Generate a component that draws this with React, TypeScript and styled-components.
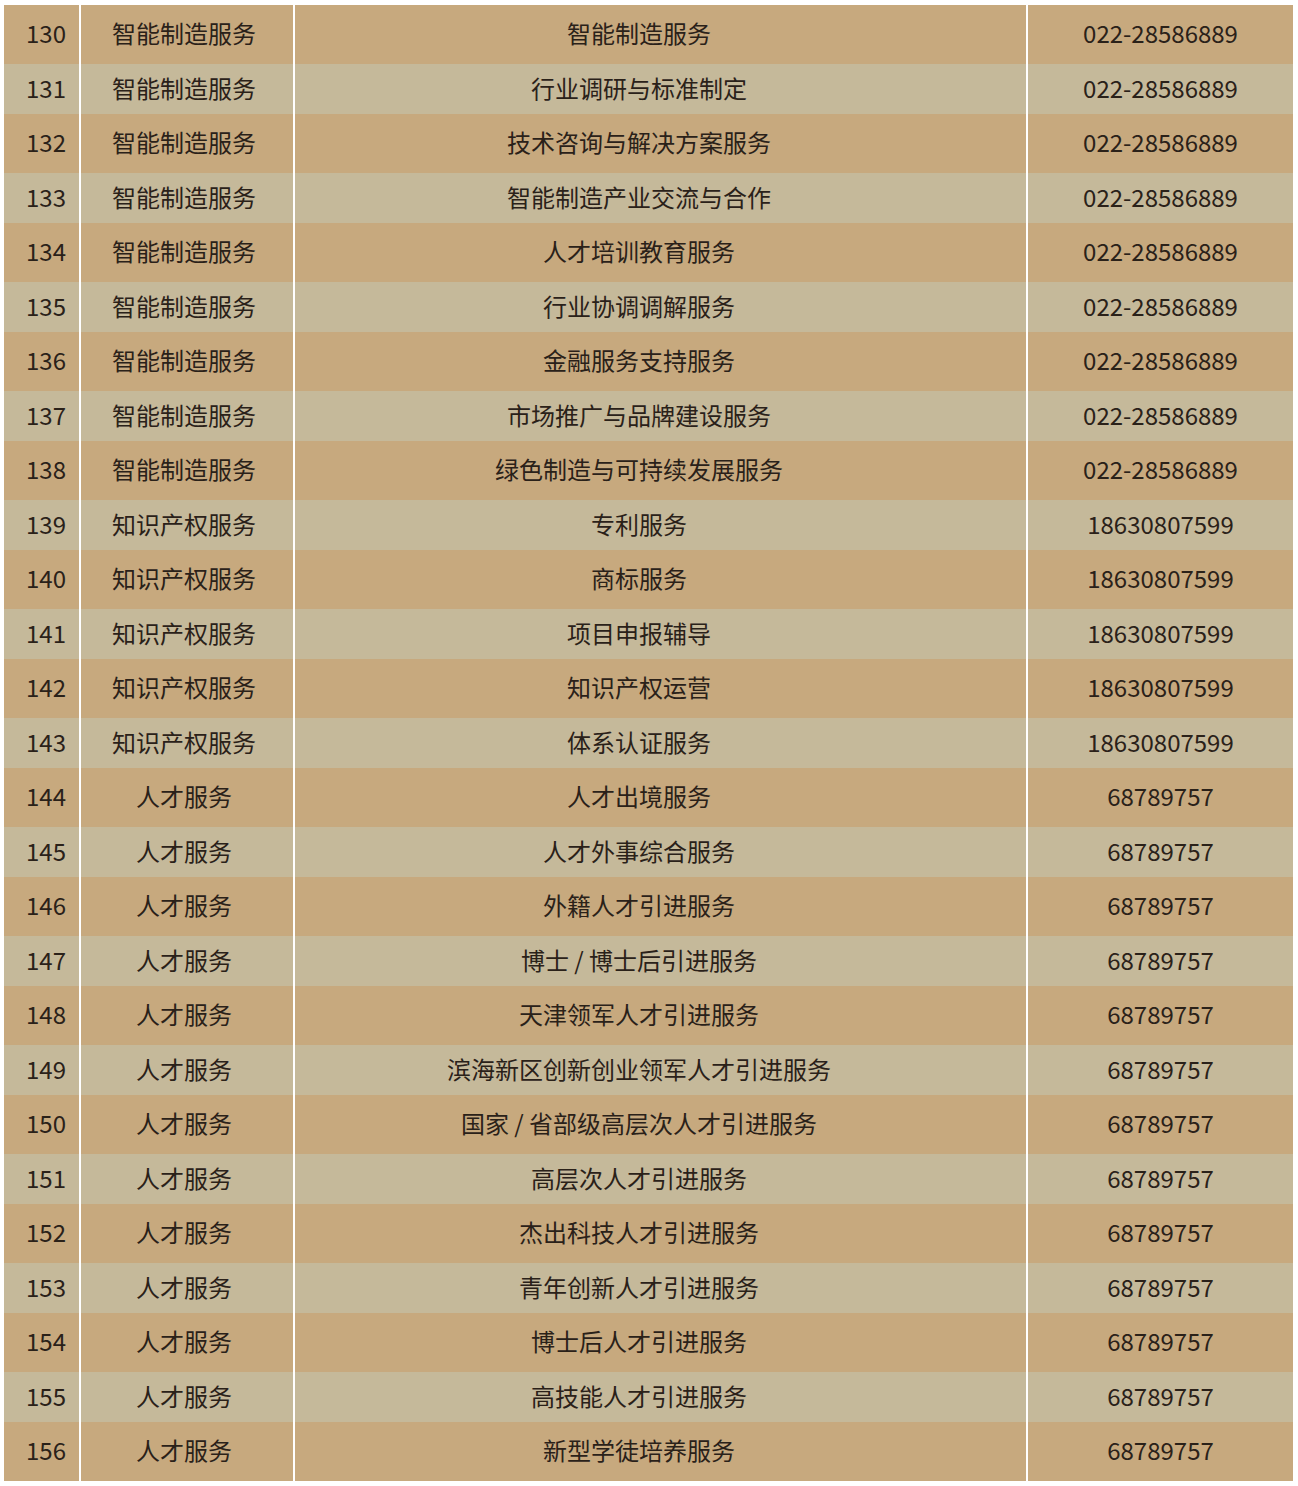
import React from "react";
import styled, { createGlobalStyle } from "styled-components";

const Global = createGlobalStyle`
  html, body { margin: 0; padding: 0; background: #ffffff; }
  body { font-family: "Noto Sans CJK SC", "Noto Sans", sans-serif; }
`;

const Table = styled.div`
  margin: 5px 0 0 4px;
  width: 1289px;
  display: flex;
  flex-direction: column;
  background: #ffffff;
`;

const Row = styled.div<{ $dark: boolean }>`
  display: grid;
  grid-template-columns: 75px 212px 731px 265px;
  column-gap: 2px;
  height: ${(p) => (p.$dark ? 59 : 50)}px;
  --cell-bg: ${(p) => (p.$dark ? "#c7a97e" : "#c5b99a")};
`;

const Cell = styled.div<{ $pl?: number; $pr?: number }>`
  background: var(--cell-bg);
  display: flex;
  align-items: center;
  justify-content: center;
  padding-left: ${(p) => p.$pl ?? 0}px;
  padding-right: ${(p) => p.$pr ?? 0}px;
  padding-bottom: 4px;
  font-size: 24px;
  color: #2a2119;
  white-space: nowrap;
  letter-spacing: 0;
`;

type Item = [number, string, string, string];

const rows: Item[] = [
  [130, "智能制造服务", "智能制造服务", "022-28586889"],
  [131, "智能制造服务", "行业调研与标准制定", "022-28586889"],
  [132, "智能制造服务", "技术咨询与解决方案服务", "022-28586889"],
  [133, "智能制造服务", "智能制造产业交流与合作", "022-28586889"],
  [134, "智能制造服务", "人才培训教育服务", "022-28586889"],
  [135, "智能制造服务", "行业协调调解服务", "022-28586889"],
  [136, "智能制造服务", "金融服务支持服务", "022-28586889"],
  [137, "智能制造服务", "市场推广与品牌建设服务", "022-28586889"],
  [138, "智能制造服务", "绿色制造与可持续发展服务", "022-28586889"],
  [139, "知识产权服务", "专利服务", "18630807599"],
  [140, "知识产权服务", "商标服务", "18630807599"],
  [141, "知识产权服务", "项目申报辅导", "18630807599"],
  [142, "知识产权服务", "知识产权运营", "18630807599"],
  [143, "知识产权服务", "体系认证服务", "18630807599"],
  [144, "人才服务", "人才出境服务", "68789757"],
  [145, "人才服务", "人才外事综合服务", "68789757"],
  [146, "人才服务", "外籍人才引进服务", "68789757"],
  [147, "人才服务", "博士 / 博士后引进服务", "68789757"],
  [148, "人才服务", "天津领军人才引进服务", "68789757"],
  [149, "人才服务", "滨海新区创新创业领军人才引进服务", "68789757"],
  [150, "人才服务", "国家 / 省部级高层次人才引进服务", "68789757"],
  [151, "人才服务", "高层次人才引进服务", "68789757"],
  [152, "人才服务", "杰出科技人才引进服务", "68789757"],
  [153, "人才服务", "青年创新人才引进服务", "68789757"],
  [154, "人才服务", "博士后人才引进服务", "68789757"],
  [155, "人才服务", "高技能人才引进服务", "68789757"],
  [156, "人才服务", "新型学徒培养服务", "68789757"],
];

export default function App() {
  return (
    <>
      <Global />
      <Table>
        {rows.map(([n, cat, name, phone], i) => (
          <Row key={n} $dark={i % 2 === 0}>
            <Cell $pl={9}>{n}</Cell>
            <Cell $pr={6}>{cat}</Cell>
            <Cell $pr={43}>{name}</Cell>
            <Cell>{phone}</Cell>
          </Row>
        ))}
      </Table>
    </>
  );
}
